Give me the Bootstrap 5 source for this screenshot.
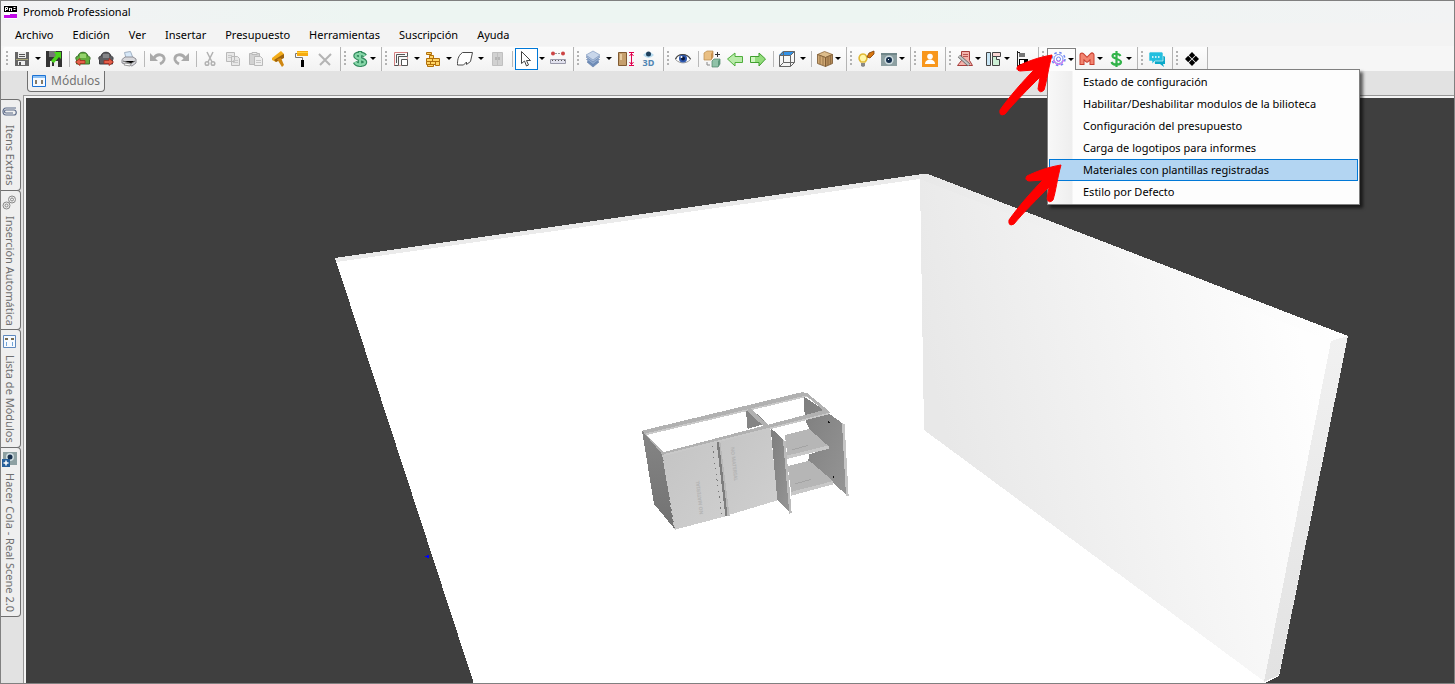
<!DOCTYPE html>
<html lang="es">
<head>
<meta charset="utf-8">
<meta name="viewport" content="width=device-width, initial-scale=1">
<title>Promob Professional</title>
<link href="https://cdn.jsdelivr.net/npm/bootstrap@5.3.0/dist/css/bootstrap.min.css" rel="stylesheet">
<style>
  body { font-family: "Noto Sans", "Open Sans", sans-serif; font-size: 11px; line-height: 16px; color: #000; background: #e2e2e2; }
  .app { border: 1px solid #808080; background: #e2e2e2; }
  .titlebar { height: 22px; padding: 0 3px; gap: 6px; background: linear-gradient(90deg, #f2f2f4, #edf5f2 25%, #edf5f2 60%, #f2f3f4); }
  .menubar { height: 23px; padding: 0 5px; gap: 1px; background: #f3f3f3; }
  .menubar a { color: #000; text-decoration: none; padding: 0 9px; }
  .tools { height: 25px; padding-left: 2px; background: #f6f6f6; }
  .tool-group { height: 24px; padding-right: 3px; border-right: 1px solid #b4b4b4; background: linear-gradient(#fdfdfd, #f2f2f2); border-radius: 3px 0 0 3px; }
  .grip { width: 8px; height: 15px; background: repeating-linear-gradient(#b2b2b2 0 2px, transparent 2px 4px) 3px 0 / 2px 100% no-repeat; }
  .tool { height: 22px; width: 23px; padding: 0 3px; border: 0; background: none; gap: 2px; }
  .tool svg { width: 16px; height: 16px; flex: none; overflow: visible; }
  .tool.drop { width: 29px; }
  .tool.split { width: 32px; gap: 5px; }
  .drop::after, .split::after { content: ""; flex: none; border: 3px solid transparent; border-top-color: #000; border-bottom: 0; }
  .bar-line { width: 1px; height: 16px; margin: 0 2px 0 3px; background: #b9b9b9; }
  .tool.pick { width: 23px; height: 22px; border: 1px solid #0078d7; padding: 0 2px; background: #fff; }
  .tool.pick-drop { width: 9px; padding: 0 1px; }
  .tool.opened { border: 1px solid #808080; border-bottom: 0; background: #fdfdfd; padding: 0 2px; }
  .strip { height: 24px; padding-left: 26px; }
  .page-tab { height: 21px; border: 1px solid #707070; border-top: 0; border-radius: 0 0 4px 4px; background: #efefef; color: #747474; padding: 0 4px; gap: 5px; font-size: 12px; }
  .rail { width: 22px; padding-top: 4px; }
  .side-tab { writing-mode: vertical-rl; width: 20px; border: 1px solid #707070; border-left: 0; border-radius: 0 4px 4px 0; background: #efefef; color: #6e6e6e; padding: 4px 2px 4px 0; gap: 6px; margin-bottom: -1px; }
  .side-tab svg { width: 15px; height: 15px; flex: none; }
  .canvas { border-left: 1px solid #989898; border-top: 1px solid #989898; background: #3f3f3f; }
  .canvas-in { border-left: 2px solid #f4f4f4; border-top: 2px solid #f4f4f4; }
  .canvas-in svg { inset: 0; }
  .menu-drop { top: 21px; left: 0; width: 313px; border: 1px solid #808080; background: linear-gradient(90deg, #fdfdfd 1px, #f7f7f7 2px, #eee 24px, #fdfdfd 25px); box-shadow: 3px 3px 3px #0009; padding: 1px; z-index: 5; }
  .menu-drop a { height: 22px; padding-left: 33px; color: #000; text-decoration: none; border: 1px solid transparent; }
  .menu-drop a.current { background: #b3d5f2; border-color: #0078d7; }
  .menu-gap { top: 20px; left: 1px; width: 27px; height: 3px; background: #fdfdfd; z-index: 6; }
  .pointers { top: -3px; left: -53px; width: 75px; height: 185px; z-index: 7; pointer-events: none; }
</style>
</head>
<body>
<div class="app d-flex flex-column vh-100 overflow-hidden">
  <header class="titlebar d-flex align-items-center">
    <svg width="13" height="14" viewBox="0 0 13 14" aria-hidden="true"><path fill="#fff" d="M0 0h13v14H0z"/><path d="M0 1h13v6H0z"/><path stroke="#fff" fill="none" d="M1.500 6V2.500h2v2h-2M5.500 6V3l1 1 1-1v3M9.500 2.500h2M9.500 4.500h2"/><path fill="#c20be8" d="M0 9h13v4H0z"/><path fill="#fff" d="M0 8h6v2H0z"/></svg>
    <span>Promob Professional</span>
  </header>
  <nav class="menubar d-flex align-items-center" aria-label="Menú">
    <a href="#">Archivo</a><a href="#">Edición</a><a href="#">Ver</a><a href="#">Insertar</a><a href="#">Presupuesto</a><a href="#">Herramientas</a><a href="#">Suscripción</a><a href="#">Ayuda</a>
  </nav>

  <div class="tools d-flex align-items-center" role="toolbar" aria-label="Herramientas">
    <div class="tool-group d-flex align-items-center">
      <span class="grip"></span>
      <button class="tool split d-flex align-items-center" aria-label="Guardar"><svg viewBox="0 0 16 16"><path fill="#666" d="M1 1h14v14H1z"/><path fill="#eee" d="M4 1h8v6H4zM4 10h7v4H4z"/><path fill="#555" d="M5 3h6v1H5zM5 5h6v1H5zM5 11h2v3H5z"/><path fill="#a9a678" d="M2 8h12v1H2z"/></svg></button>
      <button class="tool d-flex align-items-center" aria-label="Guardar como"><svg viewBox="0 0 16 16"><path fill="#333" d="M0 0h16v16H0z"/><path fill="#777" d="M3 0h7v6H3z"/><path fill="#eee" d="M4 10h8v6H4z"/><path fill="#333" d="M6 11h2v4H6z"/><path fill="#4bd51c" d="M8 1h7v7l-2-2-5 6-3-2 5-6z"/></svg></button>
      <span class="bar-line"></span>
      <button class="tool d-flex align-items-center" aria-label="Importar"><svg viewBox="0 0 16 16"><path fill="#62ac3d" stroke="#37702a" d="M3.500 5C3 0 13 0 12.500 5c3 0 3 3 2 4v4h-13V9C0 7 1 5 3.500 5z"/><path fill="#94d36c" d="M5 3h6v4H5z"/><path fill="#e5604a" stroke="#a32b1e" stroke-width=".8" d="M.5 11 5 7.500V9.500h5v3H5v2z"/></svg></button>
      <button class="tool d-flex align-items-center" aria-label="Exportar"><svg viewBox="0 0 16 16"><path fill="#5d5d60" stroke="#3c3c40" d="M3.500 5C3 0 13 0 12.500 5c3 0 3 3 2 4v4h-13V9C0 7 1 5 3.500 5z"/><path fill="#858588" d="M5 3h6v4H5z"/><path fill="#e5604a" stroke="#a32b1e" stroke-width=".8" d="M15.500 11 11 7.500V9.500H6v3h5v2z"/></svg></button>
      <button class="tool d-flex align-items-center" aria-label="Imprimir"><svg viewBox="0 0 16 16"><path fill="#d7e8f8" stroke="#a3b2c4" d="m3.500 1.500 6-1L12 7H5z"/><path fill="#d8d8dc" stroke="#8f8f96" d="M1 8.500 4 6h8l3 2v4l-4 3-10-3z"/><path stroke="#777" d="m2 10 8 2.500L14 10"/><path fill="#fff" stroke="#999" d="m4 12 6 1-1 2-6-1z"/></svg></button>
      <span class="bar-line"></span>
      <button class="tool d-flex align-items-center" aria-label="Deshacer"><svg viewBox="0 0 16 16"><path fill="none" stroke="#aaa" stroke-width="2.800" d="M4 7c3-5 11-4 10 2-.5 2-2 3-4 4"/><path fill="#aaa" d="M0 2v8h8z"/></svg></button>
      <button class="tool d-flex align-items-center" aria-label="Rehacer"><svg viewBox="0 0 16 16"><path fill="none" stroke="#aaa" stroke-width="2.800" d="M12 7C9 2 1 3 2 9c.5 2 2 3 4 4"/><path fill="#aaa" d="M16 2v8H8z"/></svg></button>
      <span class="bar-line"></span>
      <button class="tool d-flex align-items-center" aria-label="Cortar"><svg viewBox="0 0 16 16"><path fill="none" stroke="#b2b2b2" stroke-width="1.500" d="m5 1 5 10M11 1 6 11"/><circle cx="5" cy="12.500" r="1.800" fill="none" stroke="#b2b2b2" stroke-width="1.500"/><circle cx="11" cy="12.500" r="1.800" fill="none" stroke="#b2b2b2" stroke-width="1.500"/></svg></button>
      <button class="tool d-flex align-items-center" aria-label="Copiar"><svg viewBox="0 0 16 16"><path fill="#e7e7e7" stroke="#b9b9b9" d="M1.500 1.500h8v9h-8zM6.500 5.500h6l2 2v7h-8z"/><path stroke="#c8c8c8" d="M3 4.500h4M3 6.500h3M8 9.500h5M8 11.500h5"/></svg></button>
      <button class="tool d-flex align-items-center" aria-label="Pegar"><svg viewBox="0 0 16 16"><path fill="#d2d2d2" stroke="#b9b9b9" d="M1.500 2.500h10v11h-10z"/><path fill="#eee" stroke="#b9b9b9" d="M4 1.500h5v2H4zM6.500 5.500h6l2 2v7h-8z"/><path stroke="#c8c8c8" d="M8 9.500h5M8 11.500h5"/></svg></button>
      <button class="tool d-flex align-items-center" aria-label="Martillo"><svg viewBox="0 0 16 16"><path fill="#f2ac1b" d="m1 7 9-7 3 3-1 4-7 4-4-2z"/><path fill="#9c620f" d="m3 9 8-5 2-1v4l-8 4z"/><path fill="#cf8712" d="m6 8 4-1 3 7-2 2z"/></svg></button>
      <button class="tool d-flex align-items-center" aria-label="Pintar"><svg viewBox="0 0 16 16"><path fill="#f6ab12" d="M3 0h11v5H3z"/><path fill="#ffd43e" d="M3 1h11v1H3z"/><path fill="none" stroke="#777" d="M3 2.500H1.500v4h7V9"/><path d="M7 9h3v7H7z"/></svg></button>
      <button class="tool d-flex align-items-center" aria-label="Eliminar"><svg viewBox="0 0 16 16"><path stroke="#b4b4b4" stroke-width="2" d="m2 3 11 11M14 3 3 14"/></svg></button>
    </div>
    <div class="tool-group d-flex align-items-center">
      <span class="grip"></span>
      <button class="tool drop d-flex align-items-center" aria-label="Precio"><svg viewBox="0 0 16 16"><path fill="none" stroke="#328a5d" stroke-width="4.500" d="M13 5C11 2 3.500 2 3.500 5s9.500 3 9.500 6-8 4-10 0M8 0v16"/><path fill="none" stroke="#86d6a8" stroke-width="2.200" d="M13 5C11 2 3.500 2 3.500 5s9.500 3 9.500 6-8 4-10 0M8 1v14"/></svg></button>
    </div>
    <div class="tool-group d-flex align-items-center">
      <span class="grip"></span>
      <button class="tool split d-flex align-items-center" aria-label="Paredes"><svg viewBox="0 0 16 16"><path fill="none" stroke="#d58080" d="M1.500 15V1.500H15"/><path fill="none" stroke="#555" d="M1.500 14.500h4v-9h9v-4M3.500 12V3.500H12"/><path fill="#fff" stroke="#555" d="M8.500 8.500h6v6h-6z"/><path fill="none" stroke="#e79a9a" d="M6 14.500h2M14.500 6v2"/></svg></button>
      <button class="tool split d-flex align-items-center" aria-label="Ladrillos"><svg viewBox="0 0 16 16"><path fill="#ffd464" stroke="#b06f0a" d="M1.500 1.500h5v2h-5zM1.500 7.500h6v3h-6zM7.500 7.500h7v3h-7zM1.500 10.500h4v3h-4zM5.500 10.500h5v3h-5zM10.500 10.500h4v4h-4zM4.500 4.500h4v3h-4zM2.500 13.500h6v2h-6z"/></svg></button>
      <button class="tool split d-flex align-items-center" aria-label="Forma"><svg viewBox="0 0 16 16"><path fill="#fff" stroke="#4b4b4b" d="M5.500 1.500h10l-2 9-4 3v-2.500l-3 3H.5c0-4 0-9 5-12.500z"/></svg></button>
      <button class="tool d-flex align-items-center" aria-label="Puerta"><svg viewBox="0 0 16 16"><path fill="#d1d1d1" stroke="#c0c0c0" d="M3.500 1.500h10v13h-10zM8.500 1v13"/><path stroke="#999" d="M7 6v3M10 6v3"/></svg></button>
      <span class="bar-line"></span>
      <button class="tool pick d-flex align-items-center" aria-label="Seleccionar"><svg viewBox="0 0 16 16"><path fill="#fff" stroke="#444" d="M3.500.5v12l3-2.500 2 5 2-1-2-4.500h4z"/></svg></button>
      <button class="tool split pick-drop d-flex align-items-center" aria-label="Modos de selección"></button>
      <button class="tool d-flex align-items-center" aria-label="Medir"><svg viewBox="0 0 16 16"><circle cx="3" cy="2.500" r="2" fill="#c44"/><circle cx="13" cy="2.500" r="2" fill="#c44"/><path stroke="#999" d="M5 2.500h6" stroke-dasharray="2 1"/><path fill="#e2e2ee" stroke="#9a9aab" d="M.5 8.500h15v4H.5z"/><path stroke="#555" stroke-dasharray="1 2" d="M2 9.500h13"/></svg></button>
    </div>
    <div class="tool-group d-flex align-items-center">
      <span class="grip"></span>
      <button class="tool split d-flex align-items-center" aria-label="Capas"><svg viewBox="0 0 16 16"><path fill="#6f8db8" stroke="#5f7ca8" stroke-width=".6" d="m2 11 6-4 6 4-6 5z"/><path fill="#93acd0" stroke="#5f7ca8" stroke-width=".6" d="m1.500 8.500 6.500-4 6.500 4-6.500 5z"/><path fill="#a9bddb" stroke="#5f7ca8" stroke-width=".6" d="m1 6 7-4 7 4-7 5z"/><path fill="#c8d6ea" stroke="#7590b8" stroke-width=".6" d="M1 4l7-4 7 4-7 5z"/></svg></button>
      <button class="tool d-flex align-items-center" aria-label="Altura"><svg viewBox="0 0 16 16"><path fill="#c59f6d" stroke="#805a31" d="M1.500 1.500h8v13h-8z"/><path fill="#e6cba0" d="M3 3h2v6H3z"/><path fill="none" stroke="#e0004d" d="M12 1.500h5M12 14.500h5M14.500 2v12M12.500 5l2-2.500 2 2.500M12.500 11l2 2.500 2-2.500"/></svg></button>
      <button class="tool d-flex align-items-center" aria-label="Vista tridimensional"><svg viewBox="0 0 16 16"><path fill="#b8dcf0" d="M3 4q5.500-6 11 0-5.500 6-11 0z"/><circle cx="8.500" cy="3" r="2.500" fill="#1d3f5c"/><text x="2.500" y="15" font-size="9" font-weight="bold" fill="#4f86b3">3D</text></svg></button>
    </div>
    <div class="tool-group d-flex align-items-center">
      <span class="grip"></span>
      <button class="tool d-flex align-items-center" aria-label="Ver"><svg viewBox="0 0 16 16"><path fill="#fff" stroke="#999" d="M.5 8.500C3 2 12 2 15.500 8.500 11 13 5 13 .5 8.500z"/><circle cx="8" cy="7.500" r="4" fill="#2d57ad"/><circle cx="8" cy="7.500" r="2" fill="#0a1639"/><path fill="none" stroke="#444" stroke-width="1.200" d="M.5 8C3 2 12 2 15.500 8"/><circle cx="6.500" cy="6" r="1" fill="#fff"/></svg></button>
      <span class="bar-line"></span>
      <button class="tool d-flex align-items-center" aria-label="Reemplazar"><svg viewBox="0 0 16 16"><path fill="#e9bf83" stroke="#b98b4b" stroke-width=".7" d="m0 2 3-2h6v6L7 9H0z"/><path fill="#c9924e" d="m7 3 2-3v6L7 9z"/><path fill="#8fc2a8" stroke="#4b8168" stroke-width=".7" d="m8 10 2-2h6v5l-2 3H8z"/><path fill="#5c967a" d="m14 10 2-2v5l-2 3z"/><path fill="none" stroke="#333" d="M11 3.500h5M13.500 1v5"/><path fill="none" stroke="#888" d="M3 11v3h3"/></svg></button>
      <button class="tool d-flex align-items-center" aria-label="Anterior"><svg viewBox="0 0 16 16"><path fill="#b9ebaa" stroke="#4fae3c" d="M.5 8 8 2v3.500h7.500v6H8V15z"/></svg></button>
      <button class="tool d-flex align-items-center" aria-label="Siguiente"><svg viewBox="0 0 16 16"><path fill="#93dc7c" stroke="#3f9f2e" d="M15.500 8 9 2v3.500H.5v6H9V15z"/><path fill="#cff5c0" d="M1 6h4v5H1z"/></svg></button>
      <span class="bar-line"></span>
      <button class="tool split d-flex align-items-center" aria-label="Perspectiva"><svg viewBox="0 0 16 16"><path fill="#3292e8" d="M4 0h12l-4 4H0z"/><path fill="none" stroke="#666" d="M.5 4.500h11v11H.5zL4.500.5h11v11l-4 4M11.500 4.500l4-4M4.500 1v10.500h11M4.500 11.500l-4 4"/></svg></button>
      <span class="bar-line"></span>
      <button class="tool drop d-flex align-items-center" aria-label="Materiales"><svg viewBox="0 0 16 16"><path fill="#ddbd8c" stroke="#8f6a3e" stroke-width=".8" d="m.5 3.500 7-3 8 3-7 3z"/><path fill="#d0a975" stroke="#77552f" stroke-width=".8" d="m.5 3.500 8 3v9l-8-3z"/><path fill="#b58c5a" stroke="#77552f" stroke-width=".8" d="m8.500 6.500 7-3v9l-7 3z"/><path stroke="#8a683d" stroke-width=".8" d="M3 5v8M6 6v8M11 6v8M13.500 5v8"/></svg></button>
    </div>
    <div class="tool-group d-flex align-items-center">
      <span class="grip"></span>
      <button class="tool d-flex align-items-center" aria-label="Iluminación"><svg viewBox="0 0 16 16"><path fill="#fff6a8" stroke="#e1ba37" stroke-width="1.500" d="M3 11C-1 7 2 3 5 3s6 4 2 8z"/><path fill="#888" d="M3 12h4v3L5 16l-2-1z"/><path fill="#d8760f" stroke="#7a3e08" stroke-width=".8" d="m9 6 2-4 5-2v3l-4 4z"/></svg></button>
      <button class="tool drop d-flex align-items-center" aria-label="Cámara"><svg viewBox="0 0 16 16"><path fill="#8da0a2" d="M0 2h16v13H0z"/><path fill="#71878a" d="M0 2h16v2H0z"/><circle cx="8" cy="9" r="4.500" fill="#cfdde1"/><circle cx="8" cy="9" r="3" fill="#17304d"/><path fill="#fff" d="M7 8h1v1H7z"/></svg></button>
    </div>
    <div class="tool-group d-flex align-items-center">
      <span class="grip"></span>
      <button class="tool d-flex align-items-center" aria-label="Usuario"><svg viewBox="0 0 16 16"><path fill="#f8971d" d="M0 0h16v16H0z"/><circle cx="8" cy="5.500" r="2.800" fill="#fff"/><path fill="#fff" d="M3 13c0-6 10-6 10 0z"/></svg></button>
    </div>
    <div class="tool-group d-flex align-items-center">
      <span class="grip"></span>
      <button class="tool drop d-flex align-items-center" aria-label="Fabricación"><svg viewBox="0 0 16 16"><path fill="#f4b2ab" stroke="#a63d3b" d="M4.500.5h8v9l3 5H.5l4-5z"/><path stroke="#b95450" d="M6 3.500h5M6 5.500h5"/><path fill="none" stroke="#666" stroke-width="3.500" d="m2 5 10 9"/><path stroke="#c4c4c4" stroke-width="2" d="m2 5 10 9"/></svg></button>
      <button class="tool drop d-flex align-items-center" aria-label="Planos"><svg viewBox="0 0 16 16"><path fill="#c9e6f5" stroke="#444" d="M.5 1.500h4v13h-4z"/><path fill="#fbd6d4" stroke="#444" d="M6.500 1.500h8v4h-8z"/><path fill="#cdf0d5" stroke="#444" d="M6.500 5.500h4v3h3v6h-7z"/></svg></button>
      <button class="tool d-flex align-items-center" aria-label="Alinear"><svg viewBox="0 0 16 16"><path stroke="#222" d="M2.500 0v16M2 1.500h3M2 14.500h3"/><path fill="#777" d="M4 2h6v4H4z"/><path d="M4 8h9v6H4z"/><path fill="#fff" d="M5 9h4v4H5z"/></svg></button>
    </div>
    <div class="tool-group d-flex align-items-center">
      <span class="grip"></span>
      <div class="position-relative">
        <button class="tool drop opened d-flex align-items-center" aria-label="Configuración" aria-expanded="true"><svg viewBox="0 0 16 16"><g fill="none" stroke="#7087f2"><circle cx="8.500" cy="8" r="4.500"/><circle cx="8.500" cy="8" r="2"/><circle cx="8.500" cy="8" r="6.500" stroke-dasharray="2.500 2.600" stroke-width="1.500"/></g><path fill="none" stroke="#d55cf0" d="M3.500 9c1 6 9 6 10 0M6.500 9c1 2 3 2 4 0"/></svg></button>
        <nav class="menu-drop position-absolute" aria-label="Configuración">
          <a class="d-flex align-items-center" href="#">Estado de configuración</a>
          <a class="d-flex align-items-center" href="#">Habilitar/Deshabilitar modulos de la bilioteca</a>
          <a class="d-flex align-items-center" href="#">Configuración del presupuesto</a>
          <a class="d-flex align-items-center" href="#">Carga de logotipos para informes</a>
          <a class="d-flex align-items-center current" href="#">Materiales con plantillas registradas</a>
          <a class="d-flex align-items-center" href="#">Estilo por Defecto</a>
        </nav>
        <span class="menu-gap position-absolute"></span>
        <svg class="pointers position-absolute" viewBox="995 45 75 185" aria-hidden="true">
          <g id="pointer"><path fill="#fe0000" stroke="#fe0000" d="M1053 55C1040 57 1027 62 1019 66q-3 4 2 5l14-1c-10 10-25 27-34 40q-1 7 5 4c9-11 24-26 35-37l-2 12q2 5 6 1c3-9 4-21 8-35z"/></g>
          <use href="#pointer" x="9" y="110"/>
        </svg>
      </div>
      <button class="tool drop d-flex align-items-center" aria-label="Módulo M"><svg viewBox="0 0 16 16"><path fill="none" stroke="#c93e2f" stroke-width="5" stroke-linejoin="round" d="M3 14V4l5 5 5-5v10"/><path fill="none" stroke="#f28470" stroke-width="3" stroke-linejoin="round" d="M3 13V4l5 5 5-5v9"/></svg></button>
      <button class="tool drop d-flex align-items-center" aria-label="Presupuesto"><svg viewBox="0 0 16 16"><path fill="none" stroke="#32b34a" stroke-width="2.200" d="M12.500 5C11 2 4.500 2 4.500 5s8.500 3 8.500 6-8 4-9.500 0M8.500 0v16"/></svg></button>
    </div>
    <div class="tool-group d-flex align-items-center">
      <span class="grip"></span>
      <button class="tool d-flex align-items-center" aria-label="Chat"><svg viewBox="0 0 16 16"><path fill="#0aa9c9" d="M5 5h10l1 1v7h-2l1 3-4-3H6z"/><path fill="#23bfdf" stroke="#f7f7f7" stroke-width=".6" d="M1 1h12l1 1v8H6l-3 3v-3H0V2z"/><path stroke="#fff" stroke-width="1.500" stroke-dasharray="1.500 1.500" d="M3 6h9"/></svg></button>
    </div>
    <div class="tool-group d-flex align-items-center">
      <span class="grip"></span>
      <button class="tool d-flex align-items-center" aria-label="Complementos"><svg viewBox="0 0 16 16"><path d="m8 1 3.200 3.200L8 7.400 4.800 4.200zM8 8.600l3.200 3.200L8 15l-3.200-3.200zM4.200 4.800 7.400 8l-3.200 3.200L1 8zM11.800 4.800 15 8l-3.200 3.200L8.600 8z"/></svg></button>
    </div>
  </div>

  <div class="strip d-flex align-items-start">
    <button class="page-tab d-flex align-items-center"><svg width="14" height="14" viewBox="0 0 14 14" aria-hidden="true"><path fill="#f6faff" stroke="#1c72d4" d="M.5 1.500h13v11H.5z"/><path fill="#8cc1f5" d="M1 2h12v2H1z"/><path fill="#867b67" d="M3 6h2v4H3zM9 6h2v4H9z"/></svg><span>Módulos</span></button>
  </div>

  <div class="d-flex flex-grow-1">
    <aside class="rail d-flex flex-column align-items-start">
      <button class="side-tab d-flex align-items-center"><svg viewBox="0 0 15 15" aria-hidden="true"><path fill="none" stroke="#5b6a88" stroke-width="1.200" d="M14 4H4C0 4 0 11 4 11h8c3 0 3-5 0-5H4c-2 0-2 3 0 3h7"/></svg><span>Itens Extras</span></button>
      <button class="side-tab d-flex align-items-center"><svg viewBox="0 0 15 15" aria-hidden="true"><g fill="none" stroke="#888"><circle cx="10" cy="4.500" r="3.500"/><circle cx="10" cy="4.500" r="1.500"/><circle cx="4.500" cy="10.500" r="3.500"/><circle cx="4.500" cy="10.500" r="1.500"/></g></svg><span>Inserción Automática</span></button>
      <button class="side-tab d-flex align-items-center"><svg viewBox="0 0 15 15" aria-hidden="true"><path fill="#f6faff" stroke="#5f88bd" d="M1.500 1.500h12v12h-12z"/><path fill="#776b50" d="M3 4h3v2H3zM9 4h3v2H9z"/><path fill="#73a5d8" d="M4 8h1v4H4zM10 8h1v4h-1z"/></svg><span>Lista de Módulos</span></button>
      <button class="side-tab d-flex align-items-center"><svg viewBox="0 0 15 15" aria-hidden="true"><path fill="#8da0a2" d="M1 0h14v13H1z"/><circle cx="8" cy="5" r="4" fill="#cfdde1"/><circle cx="8" cy="5" r="2.500" fill="#17304d"/><path fill="#255e9a" d="M0 7h8v8H0z"/><path stroke="#fff" stroke-width="1.500" d="M4 8.500v5M1.500 11h5"/></svg><span>Hacer Cola - Real Scene 2.0</span></button>
    </aside>
    <main class="canvas flex-grow-1 d-flex">
      <div class="canvas-in flex-grow-1 position-relative">
        <svg class="position-absolute w-100 h-100" viewBox="26 98 1428 585" preserveAspectRatio="xMidYMid slice" shape-rendering="crispEdges" role="img" aria-label="Vista del ambiente">
          <defs>
            <linearGradient id="wall" x1="0" y1=".3" x2="1" y2="0"><stop offset="0" stop-color="#e8e8e8"/><stop offset=".5" stop-color="#f5f5f5"/><stop offset=".85" stop-color="#fefefe"/></linearGradient>
            <linearGradient id="endface" x1="0" y1="0" x2="0" y2="1"><stop stop-color="#f1f1f1"/><stop offset="1" stop-color="#e2e2e2"/></linearGradient>
            <linearGradient id="ledge"><stop stop-color="#e8e8e8"/><stop offset=".5" stop-color="#f6f6f6"/><stop offset="1" stop-color="#fff"/></linearGradient>
            <linearGradient id="panel" x1="0" y1="0" x2="1" y2="1"><stop stop-color="#c4c4c4"/><stop offset="1" stop-color="#cfcfcf"/></linearGradient>
            <linearGradient id="side" x1="0" y1="0" x2="0" y2="1"><stop stop-color="#858585"/><stop offset="1" stop-color="#727272"/></linearGradient>
            <linearGradient id="inner" x1="0" y1="0" x2="1" y2="1"><stop stop-color="#7e7e7e"/><stop offset="1" stop-color="#969696"/></linearGradient>
          </defs>
          <path fill="#fff" d="m335 258 587-84h6l420 162-69 340-16 8H474z"/>
          <path fill="#ebebeb" d="m335 258 587-84h6l-8 5-584 83z"/>
          <path fill="url(#wall)" d="m920 179 411 162-66 341-341-252z"/>
          <path fill="url(#ledge)" d="m920 179 2-5h6l420 162-17 5z"/>
          <path fill="url(#endface)" d="m1331 341 17-5-69 339-15 7z"/>
          <path fill="#00f" d="M425 556h2v-1h2v3h-2v-1h-2z"/>
          <g transform="translate(620 380) scale(.3333)">
            <path fill="url(#inner)" d="m552 50 66 44 52 38 14 216-44-38-75-68 2-18 60-20-68-58 2-10-7-30z"/>
            <path fill="#fff" d="m440 165 118-38 10 20-70 20z"/>
            <path fill="#b6b6b6" d="m495 165 73-18 60 54-125 33z"/>
            <path fill="#c8c8c8" d="m500 227 128-31v10l-128 31z"/>
            <path fill="#fff" d="m502 238 62-15v20l-62 16z"/>
            <path fill="#b6b6b6" d="m503 258 65-16 72 62-126 34z"/>
            <path fill="#c8c8c8" d="m512 336 128-33v10l-126 34z"/>
            <path stroke="#a4a4a4" stroke-width="3" d="m515 210 50-14M525 312l48-14"/>
            <path fill="#c5c5c5" d="m666 128 8 5 12 215-8-1z"/>
            <path fill="#858585" d="m378 92 17-5 45 42-57 18z"/>
            <path fill="url(#side)" d="m66 152 62 68 37 228-63-76z"/>
            <path stroke="#c9c9c9" stroke-width="3" stroke-dasharray="10 7" d="m128 225 36 223"/>
            <path fill="url(#panel)" d="m128 225 165-42 35 223-163 43z"/>
            <path fill="url(#panel)" d="m297 184 154-40 22 217-147 44z"/>
            <path fill="#7d7d7d" d="m290 188 7-2 26 222h-7z"/>
            <path fill="#b8b8b8" d="m297 186 4-1 28 222-6 3z"/>
            <path stroke="#777" stroke-width="3" stroke-dasharray="4 13" d="m277 197 28 205"/>
            <path fill="url(#inner)" d="m452 144 42 38 18 218-40-40z"/>
            <path fill="#bbb" d="m489 179 8 5 18 215-7 2z"/>
            <path fill="#b1b1b1" d="m66 152 482-116 17 8-5 5L78 164l54 52 488-128 10 8-3 6-499 124-8-11z"/>
            <path fill="#c9c9c9" d="m78 160 482-114v5L80 165zM132 222l495-124v5L132 228z"/>
            <path fill="#b1b1b1" d="m378 90 14-4 52 48-14 4zM548 38l14 2 66 54-12 2z"/>
            <path stroke="#111" stroke-width="4" d="m625 125 5 3M638 290l5 2"/>
            <g font-size="15" font-weight="bold" fill="#b4b4b4"><text transform="translate(332 202) rotate(84)">NO MATERIAL</text><text transform="translate(250 403) rotate(-97)">NO MATERIAL</text></g>
          </g>
        </svg>
      </div>
    </main>
  </div>
</div>
<script src="https://cdn.jsdelivr.net/npm/bootstrap@5.3.0/dist/js/bootstrap.bundle.min.js"></script>
</body>
</html>
